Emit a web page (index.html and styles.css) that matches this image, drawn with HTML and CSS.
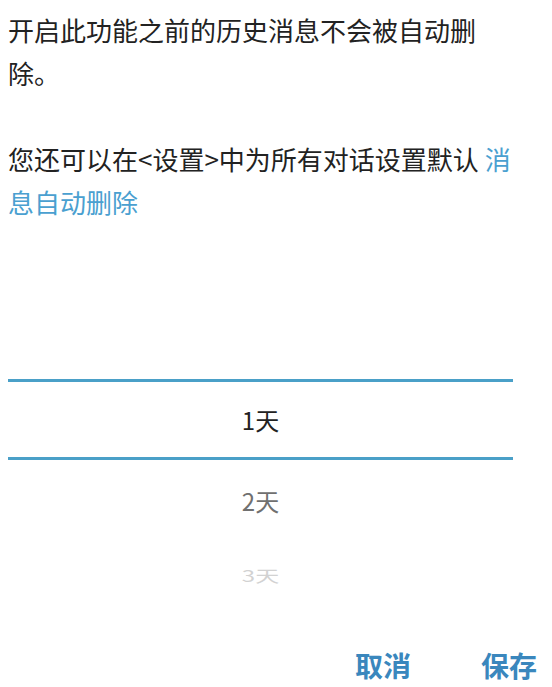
FILE: index.html
```html
<!DOCTYPE html>
<html lang="zh-CN">
<head>
<meta charset="utf-8">
<link rel="stylesheet" href="styles.css">
</head>
<body>
<div class="page">
  <div class="desc">
    <p class="para">开启此功能之前的历史消息不会被自动删除。</p>
    <p class="para gap">您还可以在&lt;设置&gt;中为所有对话设置默认 <span class="link">消息自动删除</span></p>
  </div>
  <div class="picker">
    <div class="row selected">1天</div>
    <div class="row next">2天</div>
    <div class="row far"><span class="squish">3天</span></div>
  </div>
  <div class="actions">
    <span class="btn">取消</span>
    <span class="btn">保存</span>
  </div>
</div>
</body>
</html>
```

FILE: styles.css
```css
html, body {
  margin: 0;
  padding: 0;
  background: #ffffff;
}
.page {
  width: 552px;
  height: 687px;
  box-sizing: border-box;
  padding: 8px 8px 0 8px;
  font-family: "Noto Sans CJK SC", "Noto Sans", sans-serif;
  color: #222222;
  overflow: hidden;
}
.desc {
  width: 514px;
  font-size: 26px;
  line-height: 43px;
}
.para {
  margin: 0;
}
.gap {
  margin-top: 43px;
}
.link {
  color: #4aa0d0;
}
.picker {
  width: 505px;
  margin-top: 156px;
  font-size: 24px;
}
.row {
  display: flex;
  align-items: center;
  justify-content: center;
}
.selected {
  height: 75px;
  border-top: 3px solid #4aa0c8;
  border-bottom: 3px solid #4aa0c8;
  color: #222222;
}
.next {
  height: 80px;
  color: #707070;
}
.far {
  height: 70px;
  color: #d2d2d2;
}
.squish {
  display: inline-block;
  transform: scaleY(0.65);
}
.actions {
  display: flex;
  justify-content: flex-end;
  gap: 70px;
  padding-right: 7px;
  margin-top: 35px;
  font-size: 28px;
  line-height: 40px;
  font-weight: 700;
  color: #3a87bd;
}
```
